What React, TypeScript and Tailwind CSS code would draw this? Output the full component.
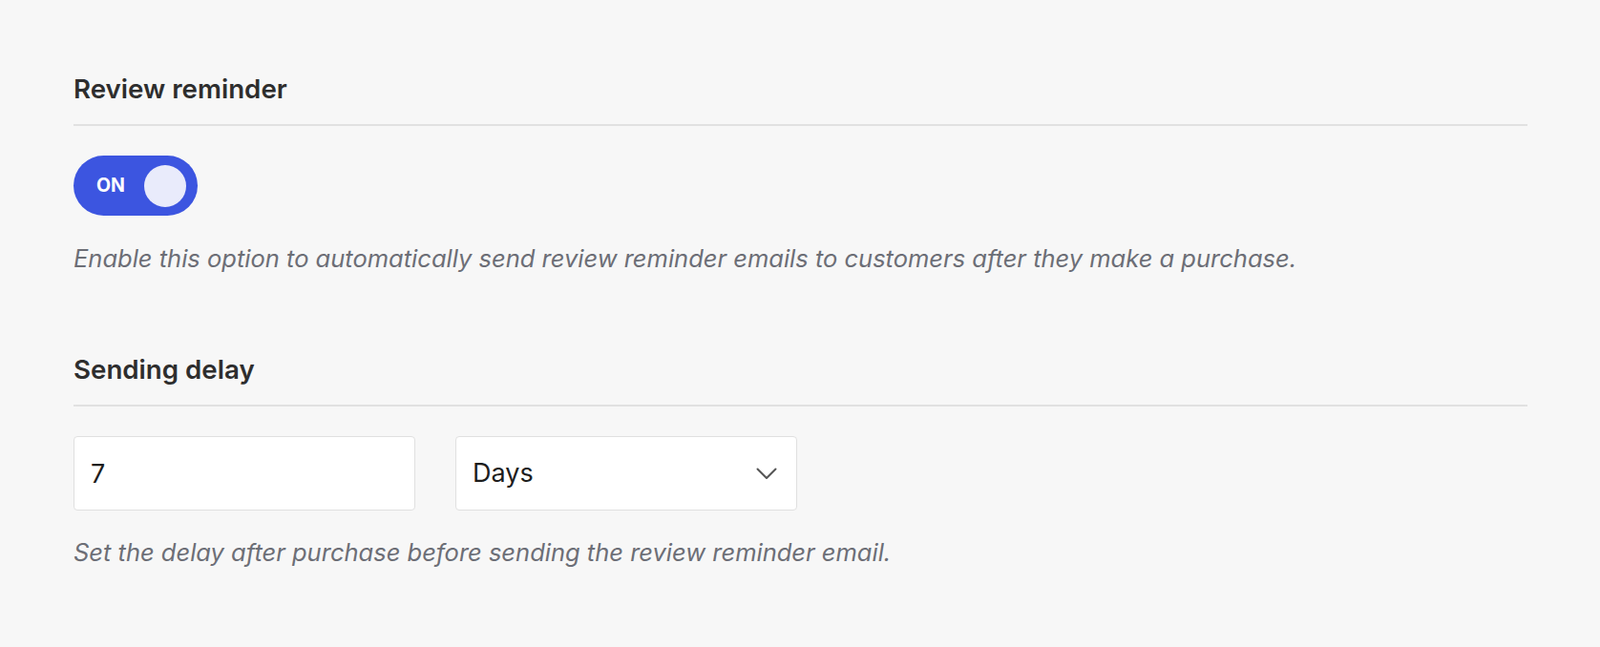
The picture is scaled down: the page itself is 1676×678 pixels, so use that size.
import { useState } from "react";

function Toggle({ on, onChange }: { on: boolean; onChange: (v: boolean) => void }) {
  return (
    <button
      type="button"
      role="switch"
      aria-checked={on}
      onClick={() => onChange(!on)}
      className={[
        "flex h-[63px] w-[130px] items-center justify-between rounded-full pl-[24px] pr-[12px]",
        on ? "bg-[#3c55e0]" : "bg-[#c9ccd6]",
      ].join(" ")}
    >
      <span className="text-[19.5px] font-bold leading-none text-white">{on ? "ON" : "OFF"}</span>
      <span className="h-[44px] w-[44px] rounded-full bg-[#e9ebfb]" />
    </button>
  );
}

function SectionHeading({ children }: { children: string }) {
  return (
    <h2 className="border-b-2 border-[#e1e1e1] pb-[19px] text-[27.7px] font-semibold leading-[36px] text-[#2e2e2e]">
      {children}
    </h2>
  );
}

function Hint({ children }: { children: string }) {
  return <p className="text-[25.5px] italic leading-[32px] text-[#6c6e76]">{children}</p>;
}

export default function App() {
  const [enabled, setEnabled] = useState(true);
  const [delay, setDelay] = useState("7");

  return (
    <div
      className="min-h-[678px] w-full bg-[#f7f7f7] pt-[75px] pl-[77px] pr-[76px]"
      style={{ fontFamily: "Inter, 'Noto Sans', sans-serif" }}
    >
      <div className="max-w-[1523px]">
        <section>
          <SectionHeading>Review reminder</SectionHeading>
          <div className="mt-[31px]">
            <Toggle on={enabled} onChange={setEnabled} />
          </div>
          <div className="mt-[29px]">
            <Hint>
              Enable this option to automatically send review reminder emails to customers after they make a purchase.
            </Hint>
          </div>
        </section>

        <section className="mt-[82px]">
          <SectionHeading>Sending delay</SectionHeading>
          <div className="mt-[31px] flex gap-[42px]">
            <input
              value={delay}
              onChange={(e) => setDelay(e.target.value)}
              className="h-[78px] w-[358px] rounded-[4px] border border-[#e0e0e0] bg-white px-[17px] text-[27px] text-[#1d1d1d] outline-none"
            />
            <button
              type="button"
              className="flex h-[78px] w-[358px] items-center justify-between rounded-[4px] border border-[#e0e0e0] bg-white pl-[17px] pr-[20px] text-[27px] text-[#1d1d1d]"
            >
              <span>Days</span>
              <svg width="22" height="13" viewBox="0 0 22 13" fill="none" aria-hidden>
                <path d="M1.5 1.5 L11 11 L20.5 1.5" stroke="#555" strokeWidth="2" strokeLinecap="round" strokeLinejoin="round" />
              </svg>
            </button>
          </div>
          <div className="mt-[28px]">
            <Hint>Set the delay after purchase before sending the review reminder email.</Hint>
          </div>
        </section>
      </div>
    </div>
  );
}
